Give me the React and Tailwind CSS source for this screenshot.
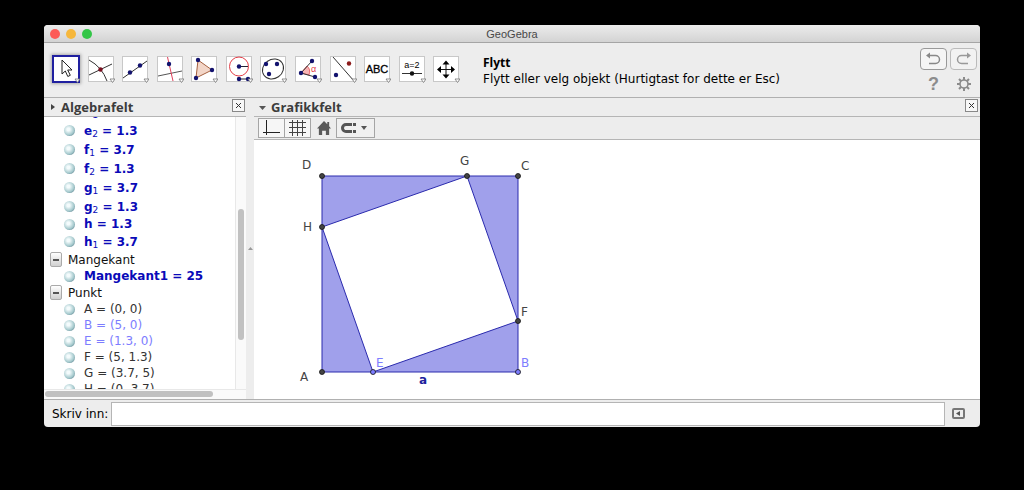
import { useState } from 'react';

const NAVY = '#12126e';

const Dot = ({ x, y, fill = NAVY, r = 2.2 }) => <circle cx={x} cy={y} r={r} fill={fill} />;

const tools = [
  {
    name: 'Flytt',
    icon: <path d="M10 5v14l3.300-3 2.500 5.500 2.500-1.200-2.600-5.300h4.300z" fill="#fff" stroke="#222" strokeWidth="1" />,
  },
  {
    name: 'Skjæring mellom to objekt',
    icon: (
      <>
        <path d="M2 20 25 9M2 5Q15 12 20 26" fill="none" stroke="#333" strokeWidth="1" />
        <Dot x={13.5} y={14.5} fill="#7a1020" />
      </>
    ),
  },
  {
    name: 'Linje gjennom to punkt',
    icon: (
      <>
        <path d="M2 23 26 6" stroke="#333" strokeWidth="1" />
        <Dot x={9} y={17.5} />
        <Dot x={19} y={10.5} />
      </>
    ),
  },
  {
    name: 'Normal linje',
    icon: (
      <>
        <path d="M2 21 26 16" stroke="#555" strokeWidth="1" />
        <path d="M11.500 2 17 26" stroke="#e0405a" strokeWidth="1" />
        <Dot x={13} y={9} />
      </>
    ),
  },
  {
    name: 'Mangekant',
    icon: (
      <>
        <path d="M8 5 22 15 6 23z" fill="#f3d6c8" stroke="#a5603f" strokeWidth="1" />
        <Dot x={8} y={5} />
        <Dot x={22} y={15} />
        <Dot x={6} y={23} />
      </>
    ),
  },
  {
    name: 'Sirkel',
    icon: (
      <>
        <circle cx="14" cy="11.500" r="9.500" fill="none" stroke="#e23c46" />
        <path d="M14 11.500h9M14 24h9" stroke="#223" strokeWidth="1" />
        <Dot x={14} y={11.5} />
        <Dot x={14} y={24} />
        <Dot x={23} y={24} />
      </>
    ),
  },
  {
    name: 'Ellipse',
    icon: (
      <>
        <ellipse cx="14" cy="14" rx="11" ry="9.500" transform="rotate(-35 14 14)" fill="none" stroke="#333" />
        <Dot x={7} y={9} />
        <Dot x={18} y={9} />
        <Dot x={10} y={19} />
      </>
    ),
  },
  {
    name: 'Vinkel',
    icon: (
      <>
        <path d="M7 18 13 11Q17 14 15 20z" fill="#f8b4b4" stroke="#e23c46" strokeWidth="0.700" />
        <path d="M18 6 7 18 21 22" fill="none" stroke="#333" />
        <text x="17" y="17" fontSize="9" fill="#e23c46" fontFamily="Liberation Sans, sans-serif">α</text>
        <Dot x={18} y={6} />
        <Dot x={7} y={18} />
        <Dot x={21} y={22} />
      </>
    ),
  },
  {
    name: 'Speiling',
    icon: (
      <>
        <path d="M4 2 25 26" stroke="#333" strokeWidth="1" />
        <Dot x={7} y={20} />
        <Dot x={20} y={8.5} fill="#8c1a1a" />
      </>
    ),
  },
  {
    name: 'Tekst',
    icon: (
      <text x="14" y="18" textAnchor="middle" fontSize="11" fill="#000" stroke="#000" strokeWidth="0.300" fontFamily="Liberation Sans, sans-serif">
        ABC
      </text>
    ),
  },
  {
    name: 'Glider',
    icon: (
      <>
        <text x="14" y="13" textAnchor="middle" fontSize="9" fill="#000" fontFamily="Liberation Sans, sans-serif">a=2</text>
        <path d="M4 18.500h20" stroke="#333" strokeWidth="1" />
        <Dot x={14} y={18.5} fill="#111" />
      </>
    ),
  },
  {
    name: 'Flytt grafikkfeltet',
    icon: (
      <>
        <path d="M14 8v13M7 14.500h14" stroke="#111" strokeWidth="1" />
        <path d="M14 5.500l3.500 4h-7zM14 23.500l3.500-4h-7zM5 14.500l4-3.500v7zM23 14.500l-4-3.500v7z" fill="#000" />
      </>
    ),
  },
];

const numbers = [
  { name: 'e', sub: '1', value: '3.7' },
  { name: 'e', sub: '2', value: '1.3' },
  { name: 'f', sub: '1', value: '3.7' },
  { name: 'f', sub: '2', value: '1.3' },
  { name: 'g', sub: '1', value: '3.7' },
  { name: 'g', sub: '2', value: '1.3' },
  { name: 'h', value: '1.3' },
  { name: 'h', sub: '1', value: '3.7' },
];

const points = [
  { name: 'A', value: '(0, 0)' },
  { name: 'B', value: '(5, 0)', free: true },
  { name: 'E', value: '(1.3, 0)', free: true },
  { name: 'F', value: '(5, 1.3)' },
  { name: 'G', value: '(3.7, 5)' },
  { name: 'H', value: '(0, 3.7)' },
];

// Points of the construction, in canvas coordinates
const vertices = [
  { name: 'A', x: 68, y: 232, lx: 46, ly: 241 },
  { name: 'B', x: 264, y: 232, lx: 267, ly: 227, free: true },
  { name: 'C', x: 264, y: 36, lx: 267, ly: 30 },
  { name: 'D', x: 68, y: 36, lx: 48, ly: 29 },
  { name: 'E', x: 119, y: 232, lx: 122, ly: 227, free: true },
  { name: 'F', x: 264, y: 181, lx: 267, ly: 176 },
  { name: 'G', x: 213, y: 36, lx: 206, ly: 25 },
  { name: 'H', x: 68, y: 87, lx: 49, ly: 91 },
];

const Marble = () => (
  <button
    aria-label="Vis eller skjul"
    className="size-[11px] shrink-0 rounded-full bg-radial-[at_40%_40%] from-[#f4fbfc] from-15% via-[#a3c8cc] via-60% to-[#35596b]"
  />
);

const CloseButton = ({ label }) => (
  <button aria-label={label} className="flex size-[13px] items-center justify-center border border-[#888] bg-[#f7f7f7]">
    <svg className="size-[7px]" viewBox="0 0 7 7" stroke="#333">
      <path d="M1 1l5 5M6 1L1 6" />
    </svg>
  </button>
);

const Group = ({ name, children }) => (
  <li>
    <div className="flex h-[17px] items-center gap-[6px] pl-[6px] text-[#111]">
      <button
        aria-label={`Lukk ${name}`}
        className="flex h-[15px] w-[12px] items-center justify-center rounded-xs border border-[#aaa] bg-linear-to-b from-white to-[#d0d0d0]"
      >
        <span className="h-[2px] w-[6px] bg-[#555]" />
      </button>
      {name}
    </div>
    <ul>{children}</ul>
  </li>
);

const AlgebraPanel = () => (
  <section className="flex w-[202px] shrink-0 flex-col">
    <header className="flex h-[19px] items-start border-b border-[#b5b5b5] pt-px pr-px pl-[6px]">
      <svg className="mt-[5px] mr-[5px] size-[6px]" viewBox="0 0 6 6">
        <path d="M1 0l4 3-4 3z" fill="#444" />
      </svg>
      <h2 className="flex-1 font-['Open_Sans',sans-serif] text-[13px] leading-[16px] font-bold text-[#3c3c3c]">Algebrafelt</h2>
      <CloseButton label="Lukk algebrafelt" />
    </header>
    <div className="flex h-[272px] bg-white">
      <div className="min-w-0 flex-1 overflow-hidden text-[12px] leading-[16px]">
        <ul className="-mt-[15px] font-bold text-[#0a0ab8]">
          {numbers.map((n) => (
            <li key={n.name + n.sub} className={`flex items-center gap-[9px] pl-5 ${n.sub ? 'h-[19px]' : 'h-[16px]'}`}>
              <Marble />
              <span>
                {n.name}
                {n.sub && <sub className="text-[9px] font-normal">{n.sub}</sub>} = {n.value}
              </span>
            </li>
          ))}
        </ul>
        <ul>
          <Group name="Mangekant">
            <li className="flex h-[16px] items-center gap-[9px] pl-5 font-bold text-[#0a0ab8]">
              <Marble />
              Mangekant1 = 25
            </li>
          </Group>
          <Group name="Punkt">
            {points.map((p) => (
              <li
                key={p.name}
                className={`flex h-[16px] items-center gap-[9px] pl-5 ${p.free ? 'text-[#7d7dff]' : 'text-[#333]'}`}
              >
                <Marble />
                {p.name} = {p.value}
              </li>
            ))}
          </Group>
        </ul>
      </div>
      <div className="w-[11px] border-l border-[#e8e8e8] bg-[#fafafa] px-[2px] pt-[92px]">
        <div className="h-[131px] rounded-full bg-[#c1c1c1]" />
      </div>
    </div>
    <div className="flex-1 border-t border-[#e8e8e8] bg-[#fafafa] px-px pt-px">
      <div className="h-[6px] w-[168px] rounded-full bg-[#c1c1c1]" />
    </div>
  </section>
);

const Construction = () => (
  <svg className="block h-[258px] w-[300px]" viewBox="0 0 300 258" fontSize="12" fontFamily="DejaVu Sans, sans-serif">
    <g fill="#a0a0eb" stroke="#2a2aad" strokeWidth="1" strokeLinejoin="round">
      <path d="M68 232 119 232 68 87z" />
      <path d="M119 232 264 232 264 181z" />
      <path d="M264 181 264 36 213 36z" />
      <path d="M213 36 68 36 68 87z" />
    </g>
    {vertices.map((v) => (
      <g key={v.name}>
        <circle cx={v.x} cy={v.y} r="2.500" fill={v.free ? '#7d7dff' : '#444'} stroke="#111" strokeWidth="0.800" />
        <text x={v.lx} y={v.ly} fill={v.free ? '#7d7dff' : '#444'}>{v.name}</text>
      </g>
    ))}
    <text x="165" y="244" fontWeight="bold" fill="#1f1f9c">a</text>
  </svg>
);

const GraphicsPanel = () => (
  <section className="flex min-w-0 flex-1 flex-col">
    <header className="flex h-[19px] items-start border-b border-[#b5b5b5] pt-px pr-[2px] pl-[5px]">
      <svg className="mt-[5px] mr-[5px] size-[7px]" viewBox="0 0 7 7">
        <path d="M0 2h7L3.500 6z" fill="#555" />
      </svg>
      <h2 className="flex-1 font-['Open_Sans',sans-serif] text-[13px] leading-[16px] font-bold text-[#3c3c3c]">Grafikkfelt</h2>
      <CloseButton label="Lukk grafikkfelt" />
    </header>
    <div className="flex h-[23px] items-center border-b border-[#b5b5b5] pl-1">
      <button aria-label="Akser" className="h-5 w-[27px] border border-[#a5a5a5] bg-[#f6f6f6]">
        <svg className="h-[18px] w-[25px]" viewBox="0 0 25 18">
          <path d="M7.500 1v15M4 13.500h17" stroke="#222" fill="none" />
        </svg>
      </button>
      <button aria-label="Rutenett" className="-ml-px h-5 w-[27px] border border-[#a5a5a5] bg-[#f6f6f6]">
        <svg className="h-[18px] w-[25px]" viewBox="0 0 25 18">
          <path d="M7.500 1v16M12.500 1v16M17.500 1v16M4 3.500h17M4 8.500h17M4 13.500h17" stroke="#444" fill="none" />
        </svg>
      </button>
      <button aria-label="Standardvisning" className="flex h-5 w-[25px] items-center justify-center">
        <svg className="size-[14px]" viewBox="0 0 15 15" fill="#5a5a5a">
          <path d="M7.500 0 11 3.500V1h2v4.500L15 8h-2v7H9.500v-4.500h-4V15H2V8H0z" />
        </svg>
      </button>
      <button aria-label="Fang punkt" className="h-5 w-[39px] border border-[#a5a5a5] bg-[#f0f0f0]">
        <svg className="h-[18px] w-[37px]" viewBox="0 0 37 18">
          <path d="M15 5.500H9a3.500 3.500 0 0 0 0 7h6" fill="none" stroke="#555" strokeWidth="3" />
          <path d="M16 4h3v3h-3zM16 11h3v3h-3z" fill="#555" />
          <path d="M24 7h6l-3 4z" fill="#555" />
        </svg>
      </button>
    </div>
    <div className="flex-1 overflow-hidden bg-white">
      <Construction />
    </div>
  </section>
);

const Toolbar = () => {
  const [active, setActive] = useState('Flytt');

  return (
    <div className="flex h-[55px] items-center justify-between border-b border-[#b0b0b0] pr-[3px] pb-[2px] pl-2">
      <div className="flex items-center">
        <div className="grid w-[415px] shrink-0 grid-cols-12">
          {tools.map((tool) => (
            <button
              key={tool.name}
              aria-label={tool.name}
              onClick={() => setActive(tool.name)}
              className={`size-7 ${tool.name === active ? 'shadow-[0_0_3px_1px_#aaa]' : ''}`}
            >
              <svg className="size-7" viewBox="0 0 28 28">
                {tool.name === active ? (
                  <rect x="1" y="1" width="26" height="26" fill="#fff" stroke="#2020a0" strokeWidth="2" />
                ) : (
                  <rect x="1.500" y="1.500" width="25" height="25" fill="#fff" stroke="#c8c8c8" />
                )}
                {tool.icon}
                <path d="M23 24h5l-2.500 3.500z" fill="#fff" stroke="#777" strokeWidth="0.800" />
              </svg>
            </button>
          ))}
        </div>
        <div className="mt-[4px] ml-4 text-[12px] leading-[16px] text-black">
          <p className="font-['Open_Sans',sans-serif] font-bold">Flytt</p>
          <p>Flytt eller velg objekt (Hurtigtast for dette er Esc)</p>
        </div>
      </div>
      <div className="grid grid-cols-2 justify-items-center gap-x-[3px] gap-y-[7px]">
        <button aria-label="Angre" className="flex h-[22px] w-[27px] items-center justify-center rounded-[4px] border border-[#999] bg-[#f5f5f5]">
          <svg className="h-[14px] w-[17px]" viewBox="0 0 17 14" fill="none" stroke="#888" strokeWidth="1.500">
            <path d="M4 3.500h6.500a4 4 0 0 1 0 8H4" />
            <path d="M5 0.500v6L1 3.500z" fill="#888" stroke="none" />
          </svg>
        </button>
        <button aria-label="Gjør om" className="flex h-[22px] w-[27px] items-center justify-center rounded-[4px] border border-[#bbb] bg-[#f2f2f2]">
          <svg className="h-[14px] w-[17px]" viewBox="0 0 17 14" fill="none" stroke="#999" strokeWidth="1.500">
            <path d="M13 3.500H6.500a4 4 0 0 0 0 8H13" />
            <path d="M12 0.500v6l4-3z" fill="#999" stroke="none" />
          </svg>
        </button>
        <button aria-label="Hjelp" className="h-[14px] font-['Liberation_Sans',sans-serif] text-[18px] leading-[14px] font-bold text-[#8c8c8c]">
          ?
        </button>
        <button aria-label="Innstillinger" className="size-[14px]">
          <svg className="size-[14px]" viewBox="0 0 14 14" fill="none" stroke="#8c8c8c">
            <circle cx="7" cy="7" r="4" strokeWidth="1.600" />
            <path d="M7 0v3M7 11v3M0 7h3M11 7h3M2 2l2.200 2.200M9.800 9.800 12 12M12 2 9.800 4.200M4.200 9.800 2 12" strokeWidth="2" />
          </svg>
        </button>
      </div>
    </div>
  );
};

const App = () => {
  return (
    <div className="min-h-screen bg-black px-11 pt-[25px] font-['DejaVu_Sans',sans-serif]">
      <main className="overflow-hidden rounded-[4px] bg-[#ededed]">
        <div className="grid h-[18px] grid-cols-[1fr_auto_1fr] items-center border-b border-[#a5a5a5] bg-linear-to-b from-[#ececec] to-[#d3d3d3] px-[6px]">
          <div className="flex gap-[6px]">
            <button aria-label="Lukk" className="size-[10px] rounded-full bg-[#fc5b57]" />
            <button aria-label="Minimer" className="size-[10px] rounded-full bg-[#f6b73c]" />
            <button aria-label="Zoom" className="size-[10px] rounded-full bg-[#34c648]" />
          </div>
          <h1 className="font-['Liberation_Sans',sans-serif] text-[11px] leading-[16px] text-[#484848]">GeoGebra</h1>
        </div>
        <Toolbar />
        <div className="flex h-[301px]">
          <AlgebraPanel />
          <div className="flex w-2 shrink-0 items-center justify-center bg-[#ededed]">
            <svg className="size-[5px]" viewBox="0 0 5 5">
              <path d="M0 4l2.500-3L5 4z" fill="#999" />
            </svg>
          </div>
          <GraphicsPanel />
        </div>
        <div className="flex h-[28px] items-center border-t border-[#b0b0b0] pr-[15px] pl-2">
          <label htmlFor="command" className="w-[59px] shrink-0 text-[12px] leading-[16px] text-black">Skriv inn:</label>
          <input id="command" type="text" className="h-[24px] min-w-0 flex-1 border border-[#b5b5b5] bg-white px-1 text-[12px] outline-none" />
          <button aria-label="Vis inntastingshjelp" className="ml-[7px] flex h-[11px] w-[13px] items-center justify-center rounded-xs border-2 border-[#777]">
            <svg className="size-[5px]" viewBox="0 0 5 5">
              <path d="M4 0v5L0 2.500z" fill="#555" />
            </svg>
          </button>
        </div>
      </main>
    </div>
  );
};

export default App;
